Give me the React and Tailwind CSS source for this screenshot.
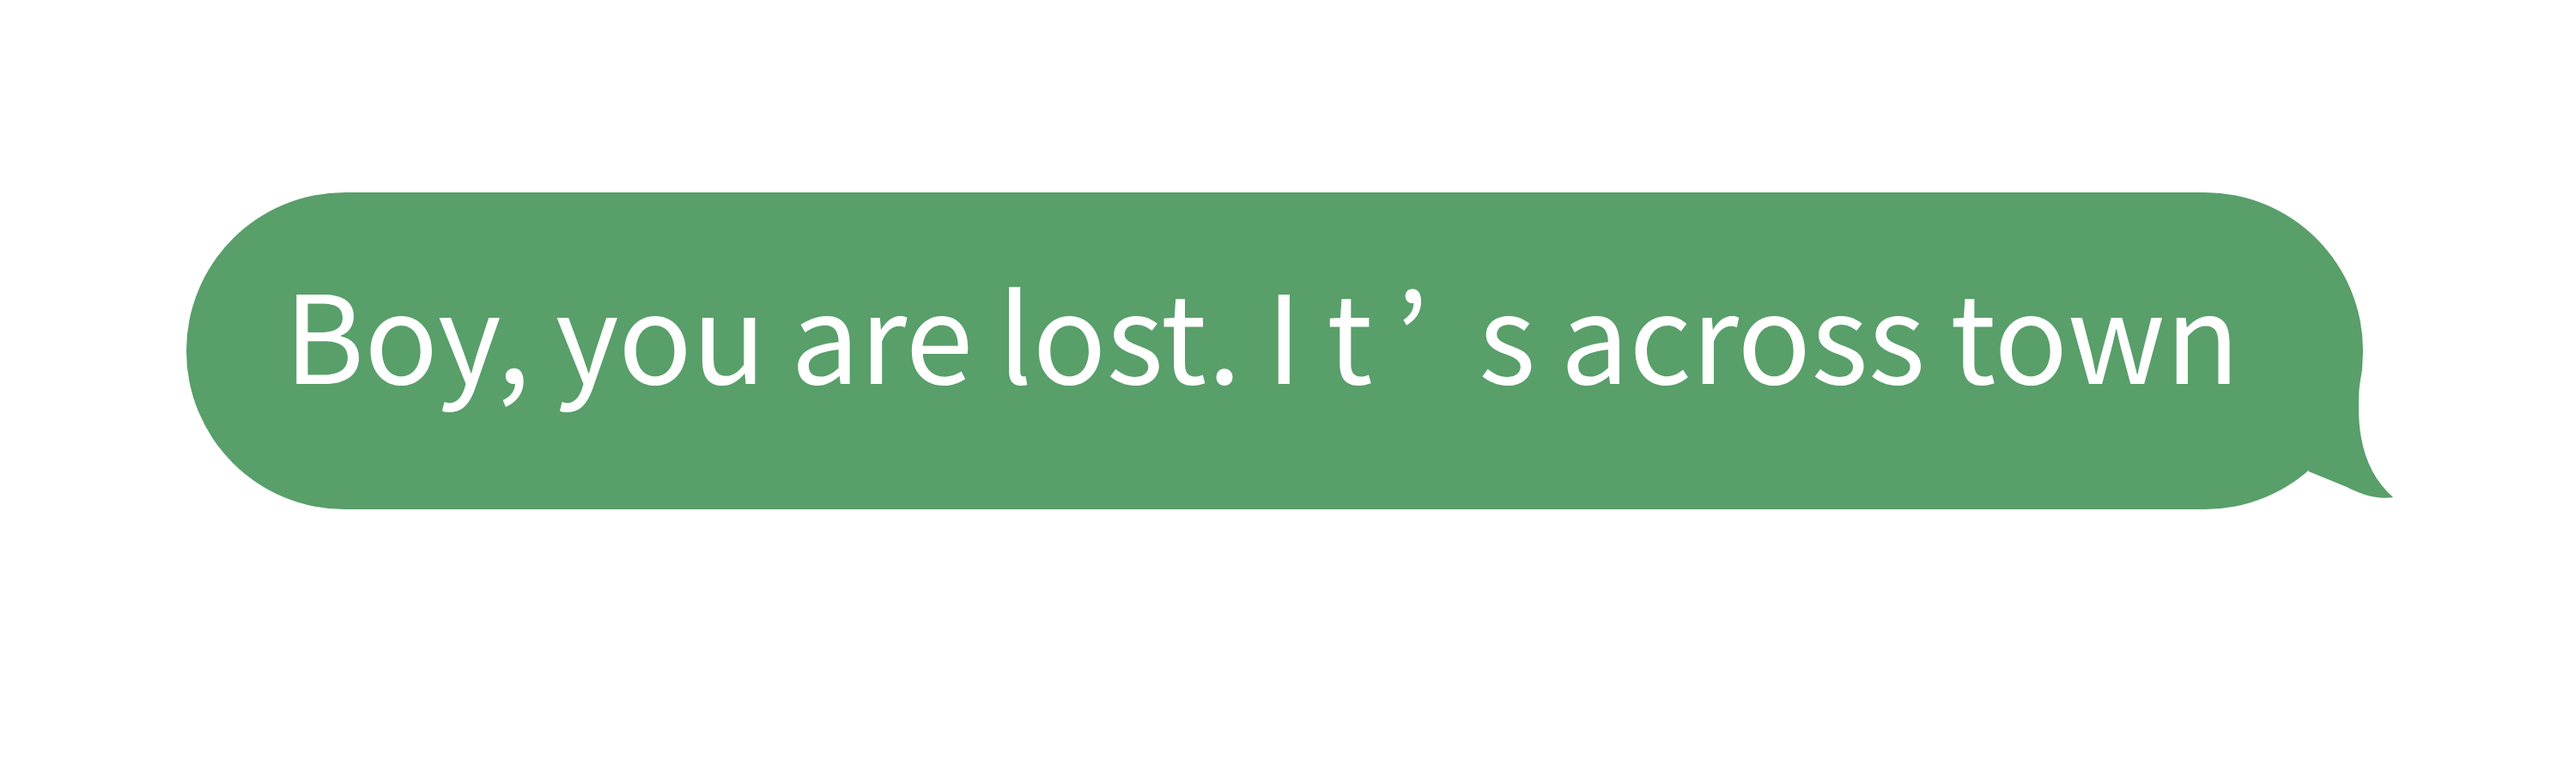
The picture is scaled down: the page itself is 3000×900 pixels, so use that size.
import React from 'react';

function Tail() {
    return (
        <svg className="absolute left-0 top-0 pointer-events-none" width="2600" height="400" viewBox="217 224 2600 400">
            <path
                d="M2650 430 L2751 430 C2748 445 2747 455 2747 470 C2746 520 2760 555 2787 579 C2770 582 2750 576 2733 567 L2689 549 Z"
                fill="#589f6a"
            />
        </svg>
    );
}

function App() {
    return (
        <div className="w-[3000px] h-[900px] bg-white pt-[224px] pl-[217px]">
            <div className="relative w-[2535px] h-[369px] bg-[#589f6a] rounded-[185px] pl-[114px] pt-[90px]">
                <Tail />
                <p
                    className="relative whitespace-nowrap text-white text-[142px] leading-none font-normal [word-spacing:-3px]"
                    style={{ fontFamily: '"Noto Sans CJK JP", sans-serif' }}
                >
                    Boy, you are lost. I t<span className="ml-[26px] mr-[58px]">’</span>s across town
                </p>
            </div>
        </div>
    );
}

export default App;
